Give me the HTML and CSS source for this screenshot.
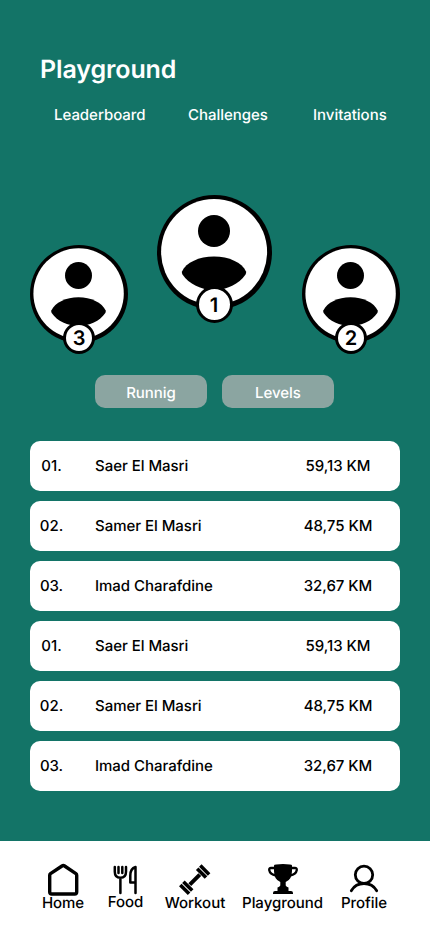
FILE: index.html
```html
<!DOCTYPE html>
<html lang="en">
<head>
<meta charset="utf-8">
<meta name="viewport" content="width=device-width, initial-scale=1">
<title>Playground</title>
<link rel="stylesheet" href="styles.css">
</head>
<body>
<div class="app">
  <header class="header">
    <h1 class="title">Playground</h1>
    <nav class="tabs">
      <a>Leaderboard</a>
      <a>Challenges</a>
      <a>Invitations</a>
    </nav>
  </header>
  <main class="main">
    <section class="podium">
      <div class="player">
        <svg class="avatar" viewBox="0 0 98 98"><circle cx="49" cy="49" r="49"/><circle cx="48.6" cy="48.5" r="45.2" fill="#fff"/><circle cx="48.5" cy="30.5" r="13.5"/><path d="M21.3 65.5C25 57.5 36 52.2 48.5 52.2S72 57.5 75.7 65.5Q76 66.8 75.3 68C70 76 59 81 48.5 81S27 76 21.7 68Q21 66.8 21.3 65.5Z"/></svg>
        <span class="badge">3</span>
      </div>
      <div class="player first">
        <svg class="avatar" viewBox="0 0 115 115"><circle cx="57.5" cy="57.5" r="57.5"/><circle cx="57.1" cy="56.9" r="53" fill="#fff"/><circle cx="57" cy="36" r="16"/><path d="M25 76.5C29 67.5 42 61.5 57 61.5S85 67.5 89 76.5Q89.5 78 88.5 79.5C82 89 70 95 57 95S32 89 25.5 79.5Q24.5 78 25 76.5Z"/></svg>
        <span class="badge">1</span>
      </div>
      <div class="player">
        <svg class="avatar" viewBox="0 0 98 98"><circle cx="49" cy="49" r="49"/><circle cx="48.6" cy="48.5" r="45.2" fill="#fff"/><circle cx="48.5" cy="30.5" r="13.5"/><path d="M21.3 65.5C25 57.5 36 52.2 48.5 52.2S72 57.5 75.7 65.5Q76 66.8 75.3 68C70 76 59 81 48.5 81S27 76 21.7 68Q21 66.8 21.3 65.5Z"/></svg>
        <span class="badge">2</span>
      </div>
    </section>
    <div class="filters"><button>Runnig</button><button>Levels</button></div>
    <ol class="ranking">
      <li><span class="rank">01.</span><span class="name">Saer El Masri</span><span class="score">59,13 KM</span></li>
      <li><span class="rank">02.</span><span class="name">Samer El Masri</span><span class="score">48,75 KM</span></li>
      <li><span class="rank">03.</span><span class="name">Imad Charafdine</span><span class="score">32,67 KM</span></li>
      <li><span class="rank">01.</span><span class="name">Saer El Masri</span><span class="score">59,13 KM</span></li>
      <li><span class="rank">02.</span><span class="name">Samer El Masri</span><span class="score">48,75 KM</span></li>
      <li><span class="rank">03.</span><span class="name">Imad Charafdine</span><span class="score">32,67 KM</span></li>
    </ol>
  </main>
  <nav class="bottom">
    <a class="home"><svg viewBox="0 0 32 32"><path class="line" stroke-width="3.4" d="M2.7 12.3Q2.7 11.3 3.5 10.7L15 3Q16.3 2.1 17.6 3L28.9 10.7Q29.7 11.3 29.7 12.3V29Q29.7 31 27.7 31H4.7Q2.7 31 2.7 29Z"/></svg>Home</a>
    <a class="food"><svg viewBox="0 0 32 32"><path class="line" stroke-width="2.5" d="M5.8 4V8.8Q5.8 14.8 11.4 14.8T17 8.8V4M9.5 4V10M13.3 4V10M11.4 15V30M26.5 30V4Q21.3 5.5 21.3 12.5V19.5H26.5"/></svg>Food</a>
    <a class="workout"><svg viewBox="0 0 32 32"><path class="line bar" stroke-width="4" d="M10.8 21.7L20.8 11.7"/><path class="line bar" stroke-width="3.6" d="M18.2 5.7L27 14.5M21.3 2.6L30.1 11.4M4.4 18.8L13.2 27.6M1.3 21.9L10.1 30.7"/></svg>Workout</a>
    <a class="playground"><svg viewBox="-1 0 32 32"><path d="M7 2.5Q7 1 16 1T25 2.5V8Q25 16.5 18.7 19V22.5Q19.5 24 21.5 24.5V28H24Q26 28 26 30V31H6V30Q6 28 8 28H10.5V24.5Q12.5 24 13.3 22.5V19Q7 16.5 7 8Z"/><path class="line" stroke-width="2.3" d="M7.5 5H4Q2 5 2.2 7Q3 11.5 9 12.5M24.5 5H28Q30 5 29.8 7Q29 11.5 23 12.5"/></svg>Playground</a>
    <a class="profile"><svg viewBox="0 0 32 32"><circle class="line" stroke-width="2.8" cx="16" cy="11.8" r="8.7"/><path class="line" stroke-width="2.8" d="M3.3 27.7C6 23 10.5 20.5 16 20.5S26 23 28.7 27.7"/></svg>Profile</a>
  </nav>
</div>
</body>
</html>
```

FILE: styles.css
```css
* { box-sizing: border-box; }
body { margin: 0; font: 500 15px/18px Inter, "Liberation Sans", sans-serif; letter-spacing: -0.03px; text-rendering: geometricPrecision; color: #000; }
.app { display: flex; flex-direction: column; height: 932px; background: #137467; overflow: hidden; }
.header { padding: 55px 42px 0 40px; color: #fff; }
.title { margin: 0; font-size: 25px; line-height: 30px; font-weight: 600; letter-spacing: -0.1px; }
.tabs { display: grid; grid-template-columns: 134px 125px auto; margin: 21px 0 0 14px; }
.main { flex: 1; padding: 71px 30px 0; }
.podium { display: flex; justify-content: space-between; align-items: flex-start; height: 180px; }
.player { position: relative; width: 98px; margin-top: 50px; }
.first { width: 115px; margin: 0 1px 0 0; }
.avatar { display: block; width: 100%; }
.badge { position: absolute; left: 33px; top: 77px; width: 32px; height: 32px; border: 3px solid #000; border-radius: 50%; background: #fff; display: flex; align-items: center; justify-content: center; font-size: 20px; font-weight: 600; }
.first .badge { left: 39px; top: 91px; width: 37px; height: 37px; padding-right: 1px; }
.filters { display: flex; justify-content: center; gap: 15px; padding-right: 1px; }
.filters button { width: 112px; height: 33px; padding: 2px 0 0; border: 0; border-radius: 10px; background: #8ba5a1; color: #fff; font: inherit; letter-spacing: inherit; text-rendering: inherit; }
.ranking { list-style: none; margin: 33px 0 0; padding: 0; display: grid; gap: 10px; }
.ranking li { height: 50px; display: grid; grid-template-columns: 43px 1fr 124px; align-items: center; background: #fff; border-radius: 10px; }
.rank, .score { text-align: center; }
.name { padding-left: 22px; }
.bottom { height: 91px; background: #fff; display: grid; grid-template-columns: 42px 83px 56px 119px 44px; justify-items: center; padding: 22px 0 0 42px; }
.bottom a { display: flex; flex-direction: column; align-items: center; }
.bottom svg { display: block; width: 32px; height: 32px; margin-bottom: -1px; overflow: visible; }
.bottom .food svg { margin-bottom: -2px; }
.line { fill: none; stroke: #000; stroke-linecap: round; stroke-linejoin: round; }
.bar { stroke-linecap: butt; }
```
